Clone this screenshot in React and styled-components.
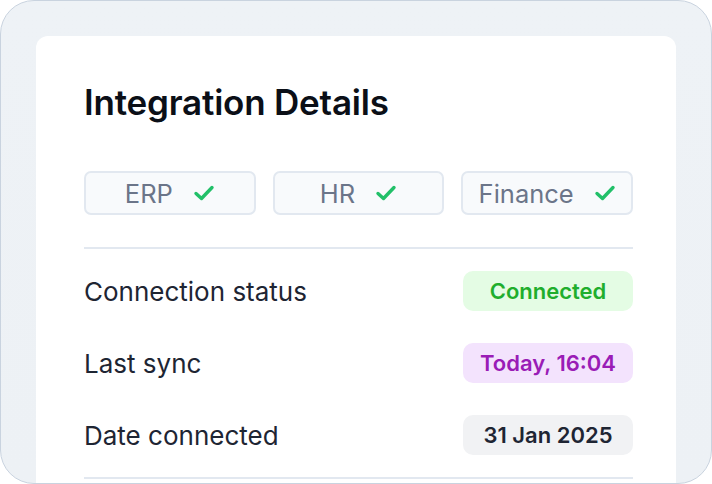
import React from "react";
import styled, { createGlobalStyle } from "styled-components";

const Global = createGlobalStyle`
  html, body { margin: 0; padding: 0; background: #ffffff; }
  body { font-family: Inter, "Noto Sans", sans-serif; }
  * { box-sizing: border-box; }
`;

const Frame = styled.div`
  width: 712px;
  height: 484px;
  border: 1px solid #c9d3df;
  border-radius: 34px;
  background: linear-gradient(180deg, #eef2f6 0%, #edf1f5 100%);
  padding: 35px 35px 0 35px;
  overflow: hidden;
`;

const Card = styled.div`
  background: #ffffff;
  border-radius: 12px 12px 0 0;
  height: 100%;
  padding: 46px 43px 0 48px;
`;

const Title = styled.h1`
  margin: 0;
  font-size: 35px;
  line-height: 40px;
  font-weight: 600;
  color: #0b0f17;
  letter-spacing: -0.2px;
`;

const Pills = styled.div`
  display: flex;
  gap: 17px;
  margin-top: 49px;
`;

const Pill = styled.div`
  flex: 1;
  height: 44px;
  border: 2px solid #e2e8f0;
  background: #f8fafc;
  border-radius: 7px;
  display: flex;
  align-items: center;
  justify-content: center;
  gap: 20px;
  font-size: 25.5px;
  color: #6b7589;
`;

const Divider = styled.div`
  height: 2px;
  background: #e2e8f0;
  margin-top: ${(p) => p.$top || 0}px;
`;

const Rows = styled.div`
  padding: 6px 0;
`;

const Row = styled.div`
  height: 72px;
  display: flex;
  align-items: center;
  justify-content: space-between;
`;

const Label = styled.span`
  font-size: 26px;
  color: #1e2533;
`;

const tones = {
  green: { bg: "#e4fce4", fg: "#1fae2d" },
  purple: { bg: "#f3e3fd", fg: "#9a1cb6" },
  gray: { bg: "#f1f2f4", fg: "#1e2533" },
};

const Badge = styled.span`
  width: 170px;
  height: 40px;
  border-radius: 10px;
  display: flex;
  align-items: center;
  justify-content: center;
  font-size: 22px;
  font-weight: 600;
  background: ${(p) => tones[p.$tone].bg};
  color: ${(p) => tones[p.$tone].fg};
`;

const Check = () => (
  <svg width="22" height="18" viewBox="0 0 22 18" fill="none">
    <path d="M3 9.5 L8.5 14.5 L19 3.5" stroke="#22c069" strokeWidth="3.4" strokeLinecap="round" strokeLinejoin="round" />
  </svg>
);

export default function App() {
  return (
    <>
      <Global />
      <Frame>
        <Card>
          <Title>Integration Details</Title>
          <Pills>
            {["ERP", "HR", "Finance"].map((n) => (
              <Pill key={n}>
                <span>{n}</span>
                <Check />
              </Pill>
            ))}
          </Pills>
          <Divider $top={32} />
          <Rows>
            <Row>
              <Label>Connection status</Label>
              <Badge $tone="green">Connected</Badge>
            </Row>
            <Row>
              <Label>Last sync</Label>
              <Badge $tone="purple">Today, 16:04</Badge>
            </Row>
            <Row>
              <Label>Date connected</Label>
              <Badge $tone="gray">31 Jan 2025</Badge>
            </Row>
          </Rows>
          <Divider />
        </Card>
      </Frame>
    </>
  );
}
